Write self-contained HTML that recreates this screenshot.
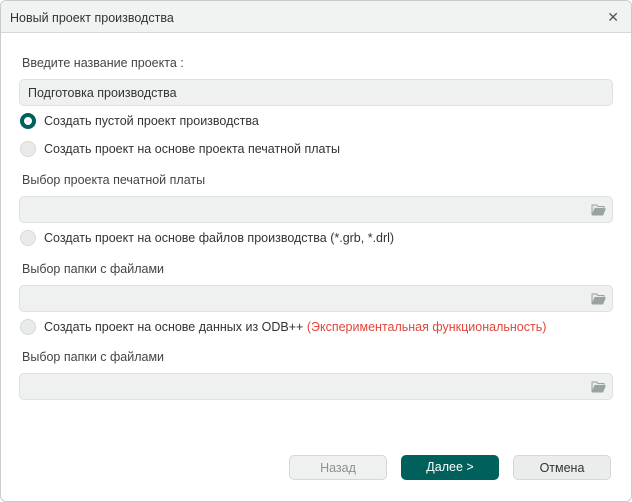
<!DOCTYPE html><html><head><style>
body{margin:0;width:632px;height:502px;background:#fff;font-family:"Liberation Sans",sans-serif;font-size:12.5px;color:#333;position:relative;overflow:hidden}
.d{position:absolute;left:0;top:0;width:630px;height:500px;border:1px solid #c8cccb;border-radius:6px;overflow:hidden}
.h{height:31px;background:#f1f2f2;border-bottom:1px solid #d4d8d7;position:relative}
.h .ti{position:absolute;left:9px;top:10px;color:#333}
.x{position:absolute;right:12px;top:8px;font-size:14px;color:#555}
.t{position:absolute;left:21px;color:#444}
.in{position:absolute;left:18px;width:592px;height:25px;background:#eff1f0;border:1px solid #dde1e0;border-radius:5px}
.r{position:absolute;left:19px;width:16px;height:16px;border-radius:50%;background:#e8ebea;border:1px solid #d6dbd9;box-sizing:border-box}
.r.on{background:#fff;border:4px solid #00605c}
.rl{position:absolute;left:43px;color:#333}
.f{position:absolute;right:5px;top:6px}
.b{position:absolute;top:454px;width:98px;height:25px;border-radius:5px;box-sizing:border-box;text-align:center;line-height:25px}
</style></head><body><div class="d">
<div class="h"><span class="ti">Новый проект производства</span><span class="x">✕</span></div>
<div class="t" style="top:55px">Введите название проекта :</div>
<div class="in" style="top:78px"><span style="position:absolute;left:8px;top:6px;color:#333">Подготовка производства</span></div>
<div class="r on" style="top:112px"></div><div class="rl" style="top:113px">Создать пустой проект производства</div>
<div class="r" style="top:140px"></div><div class="rl" style="top:141px">Создать проект на основе проекта печатной платы</div>
<div class="t" style="top:172px">Выбор проекта печатной платы</div>
<div class="in" style="top:195px"><svg class="f" width="16" height="14" viewBox="0 0 16 14"><path d="M1 2h5l1 1.5h6v2H4L1 12z" fill="#e6e9e8" stroke="#9aa3a0"/><path d="M1 12.5l3-7h11l-3 7z" fill="#9aa3a0"/></svg></div>
<div class="r" style="top:229px"></div><div class="rl" style="top:230px">Создать проект на основе файлов производства (*.grb, *.drl)</div>
<div class="t" style="top:261px">Выбор папки с файлами</div>
<div class="in" style="top:284px"><svg class="f" width="16" height="14" viewBox="0 0 16 14"><path d="M1 2h5l1 1.5h6v2H4L1 12z" fill="#e6e9e8" stroke="#9aa3a0"/><path d="M1 12.5l3-7h11l-3 7z" fill="#9aa3a0"/></svg></div>
<div class="r" style="top:318px"></div><div class="rl" style="top:319px">Создать проект на основе данных из ODB++ <span style="color:#e0473c">(Экспериментальная функциональность)</span></div>
<div class="t" style="top:349px">Выбор папки с файлами</div>
<div class="in" style="top:372px"><svg class="f" width="16" height="14" viewBox="0 0 16 14"><path d="M1 2h5l1 1.5h6v2H4L1 12z" fill="#e6e9e8" stroke="#9aa3a0"/><path d="M1 12.5l3-7h11l-3 7z" fill="#9aa3a0"/></svg></div>
<div class="b" style="left:288px;background:#eef1f0;border:1px solid #d3d9d7;color:#8a9290">Назад</div>
<div class="b" style="left:400px;background:#00605c;color:#fff">Далее &gt;</div>
<div class="b" style="left:512px;background:#eaedec;border:1px solid #d3d9d7;color:#333">Отмена</div>
</div></body></html>
